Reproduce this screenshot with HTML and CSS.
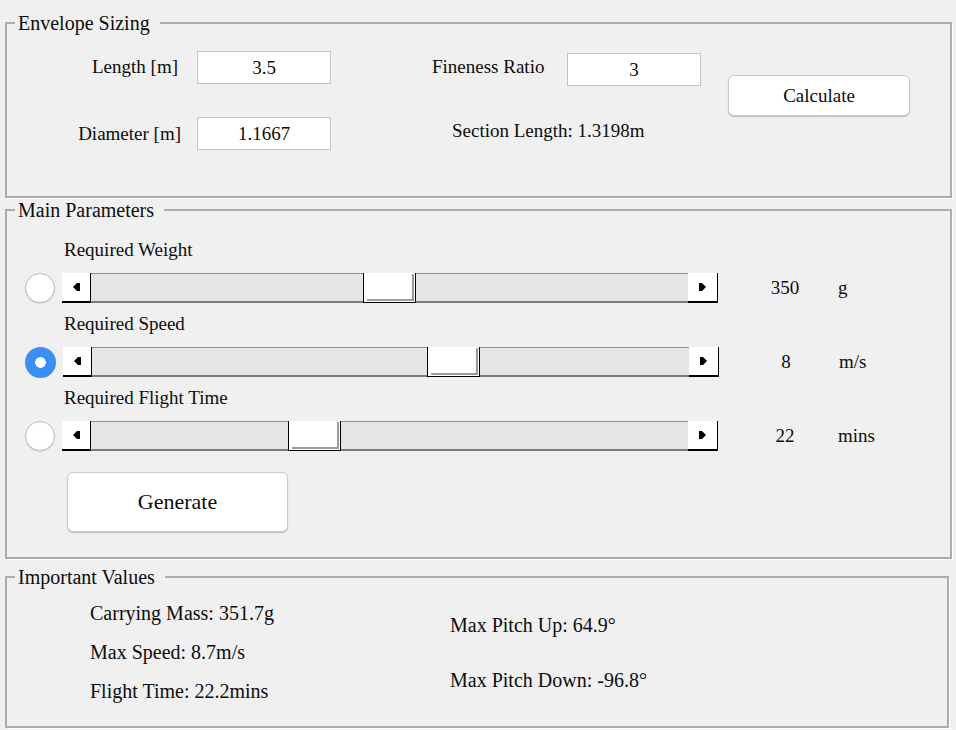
FILE: index.html
```html
<!DOCTYPE html>
<html>
<head>
<meta charset="utf-8">
<link rel="stylesheet" href="styles.css">
</head>
<body>
<fieldset class="panel panel-env">
  <legend>Envelope Sizing</legend>
  <div class="env-grid">
    <span class="lbl lbl-length">Length [m]</span>
    <div class="field f-length">3.5</div>
    <span class="lbl lbl-fin">Fineness Ratio</span>
    <div class="field f-fin">3</div>
    <button class="btn btn-calc">Calculate</button>
    <span class="lbl lbl-dia">Diameter [m]</span>
    <div class="field f-dia">1.1667</div>
    <span class="lbl lbl-sec">Section Length: 1.3198m</span>
  </div>
</fieldset>

<fieldset class="panel panel-main">
  <legend>Main Parameters</legend>
  <div class="params">
    <div class="param">
      <div class="param-label">Required Weight</div>
      <div class="param-row">
        <span class="radio"></span>
        <div class="slider">
          <span class="arrow arrow-left"><svg width="7" height="8" viewBox="0 0 7 8"><polygon points="0,4 4,0 7,0 7,8 4,8" fill="#000"/></svg></span>
          <div class="track"><span class="thumb" style="left:272px"></span></div>
          <span class="arrow arrow-right"><svg width="7" height="8" viewBox="0 0 7 8"><polygon points="0,0 3,0 7,4 3,8 0,8" fill="#000"/></svg></span>
        </div>
        <span class="value">350</span>
        <span class="unit">g</span>
      </div>
    </div>
    <div class="param">
      <div class="param-label">Required Speed</div>
      <div class="param-row">
        <span class="radio radio-on"></span>
        <div class="slider">
          <span class="arrow arrow-left"><svg width="7" height="8" viewBox="0 0 7 8"><polygon points="0,4 4,0 7,0 7,8 4,8" fill="#000"/></svg></span>
          <div class="track"><span class="thumb" style="left:335px"></span></div>
          <span class="arrow arrow-right"><svg width="7" height="8" viewBox="0 0 7 8"><polygon points="0,0 3,0 7,4 3,8 0,8" fill="#000"/></svg></span>
        </div>
        <span class="value">8</span>
        <span class="unit">m/s</span>
      </div>
    </div>
    <div class="param">
      <div class="param-label">Required Flight Time</div>
      <div class="param-row">
        <span class="radio"></span>
        <div class="slider">
          <span class="arrow arrow-left"><svg width="7" height="8" viewBox="0 0 7 8"><polygon points="0,4 4,0 7,0 7,8 4,8" fill="#000"/></svg></span>
          <div class="track"><span class="thumb" style="left:197px"></span></div>
          <span class="arrow arrow-right"><svg width="7" height="8" viewBox="0 0 7 8"><polygon points="0,0 3,0 7,4 3,8 0,8" fill="#000"/></svg></span>
        </div>
        <span class="value">22</span>
        <span class="unit">mins</span>
      </div>
    </div>
    <button class="btn btn-gen">Generate</button>
  </div>
</fieldset>

<fieldset class="panel panel-values">
  <legend>Important Values</legend>
  <div class="values">
    <div class="col col-left">
      <div>Carrying Mass: 351.7g</div>
      <div>Max Speed: 8.7m/s</div>
      <div>Flight Time: 22.2mins</div>
    </div>
    <div class="col col-right">
      <div>Max Pitch Up: 64.9°</div>
      <div>Max Pitch Down: -96.8°</div>
    </div>
  </div>
</fieldset>
</body>
</html>
```

FILE: styles.css
```css
* { box-sizing: border-box; }
html, body { margin: 0; padding: 0; }
body {
  background: #f0f0f0;
  font-family: "Liberation Serif", "Times New Roman", serif;
  color: #0d0d0d;
  width: 956px;
  height: 730px;
  overflow: hidden;
}
button, legend, .field, .lbl, .values, .param-label, .param-row {
  font-family: "Liberation Serif", "Times New Roman", serif;
}

.panel {
  margin: 0 4px 0 5px;
  padding: 0;
  border: 2px solid #acacac;
  box-shadow: 1px 1px 0 #fff;
  min-width: 0;
}
.panel legend {
  margin-left: 8px;
  padding: 0 10px 0 3px;
  font-size: 20px;
  line-height: 24px;
}
.panel-env { margin-top: 11px; }
.panel-values { margin-top: 6px; margin-right: 7px; }

/* Envelope sizing */
.env-grid {
  height: 161px;
  padding-top: 16px;
  display: grid;
  grid-template-columns: 176px 14px 134px 101px 135px 134px 27px 182px;
  grid-template-rows: 33px 33px;
  row-gap: 33px;
  align-items: center;
  font-size: 19px;
  line-height: 24px;
}
.lbl { white-space: nowrap; }
.lbl-length { grid-column: 1; grid-row: 1; justify-self: end; padding-right: 5px; margin-top: -2px; }
.lbl-dia { grid-column: 1; grid-row: 2; justify-self: end; padding-right: 2px; }
.lbl-fin { grid-column: 5; grid-row: 1; margin-top: -2px; }
.lbl-sec { grid-column: 5 / span 3; grid-row: 2; margin-left: 20px; margin-top: -6px; }
.field {
  height: 33px;
  background: #fff;
  border: 1px solid #c4c4c4;
  text-align: center;
  line-height: 31px;
  font-size: 19px;
  align-self: start;
}
.f-length { grid-column: 3; grid-row: 1; }
.f-dia { grid-column: 3; grid-row: 2; }
.f-fin { grid-column: 6; grid-row: 1; margin-top: 2px; }

.btn {
  background: #fff;
  border: 1px solid #c9c9c9;
  border-radius: 6px;
  box-shadow: 0 1px 1px rgba(0,0,0,0.22);
  color: #0d0d0d;
  padding: 0;
}
.btn-calc {
  grid-column: 8;
  grid-row: 1 / span 2;
  align-self: start;
  margin-top: 24px;
  height: 41px;
  font-size: 19px;
  line-height: 36px;
}

/* Main parameters */
.params {
  height: 335px;
  padding: 16px 0 0 0;
}
.param + .param { margin-top: 9px; }
.param-label {
  font-size: 19px;
  line-height: 24px;
  padding-left: 57px;
  margin-bottom: 11px;
}
.param-row {
  display: flex;
  align-items: center;
  height: 30px;
  padding-left: 18px;
  font-size: 19px;
}
.radio {
  width: 30px;
  height: 30px;
  border-radius: 50%;
  background: #fff;
  border: 1px solid #bcbcbc;
  box-shadow: 0 1px 1px rgba(0,0,0,0.12);
  flex: none;
}
.radio-on {
  border: none;
  width: 31px;
  height: 31px;
  background: radial-gradient(circle, #fff 0 5px, #3a8ef5 5.6px);
  box-shadow: none;
}
.slider {
  display: flex;
  width: 656px;
  height: 30px;
  margin-left: 7px;
  flex: none;
}
.arrow {
  display: flex;
  align-items: center;
  padding-left: 11px;
  background: #fff;
  border-right: 1px solid #000;
  border-bottom: 2px solid #000;
  flex: none;
}
.arrow svg { display: block; }
.arrow-left { width: 29px; }
.arrow-right { width: 30px; }
.track {
  flex: 1;
  position: relative;
  background: #e5e5e5;
  border-top: 1px solid #909090;
  border-bottom: 2px solid #7c7c7c;
}
.thumb {
  position: absolute;
  top: -1px;
  bottom: -2px;
  width: 53px;
  background: #fff;
  border: 1px solid #000;
  border-top: none;
}
.thumb::after {
  content: "";
  position: absolute;
  left: 3px;
  top: 1px;
  right: 1px;
  bottom: 1px;
  border-right: 2px solid #9a9a9a;
  border-bottom: 2px solid #9a9a9a;
}
.value {
  width: 50px;
  margin-left: 42px;
  text-align: center;
}
.unit { margin-left: 28px; }

.btn-gen {
  display: block;
  width: 221px;
  height: 60px;
  margin: 21px 0 0 60px;
  font-size: 22px;
}

/* Important values */
.values {
  display: flex;
  height: 137px;
  padding: 12px 0 0 83px;
  font-size: 20px;
  line-height: 24px;
}
.col { display: flex; flex-direction: column; }
.col-left { width: 360px; gap: 15px; }
.col-right { padding-top: 12px; gap: 31px; }
```
